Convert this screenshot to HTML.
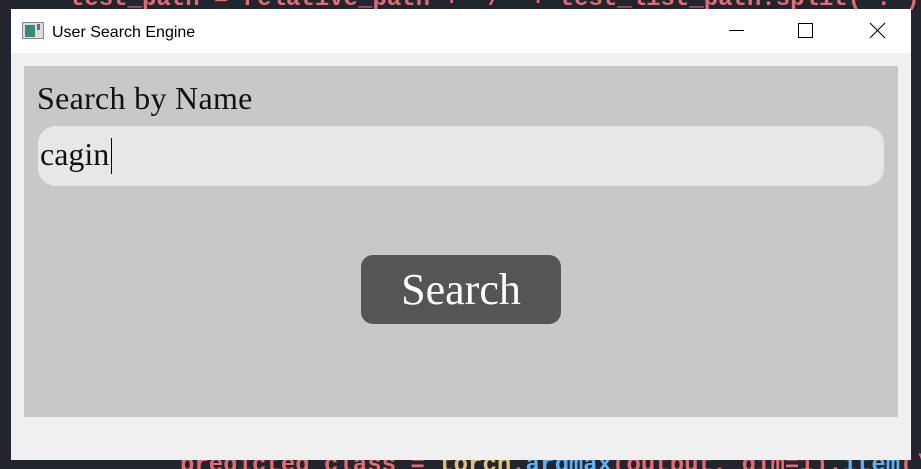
<!DOCTYPE html>
<html><head><style>
html,body{margin:0;width:921px;height:469px;overflow:hidden}
body{background:#22252d;position:relative;font-family:"Liberation Serif",serif}
.code{position:absolute;font-family:"Liberation Mono",monospace;font-size:24px;font-weight:bold;white-space:pre}
#win{position:absolute;left:11px;top:9px;width:900px;height:451px;background:#f0f0f0}
#tb{position:absolute;left:0;top:0;width:900px;height:44px;background:#fff}
#title{position:absolute;left:41px;top:15px;font-family:"Liberation Sans",sans-serif;font-size:16px;color:#000}
#panel{position:absolute;left:13px;top:57px;width:874px;height:351px;background:#c8c8c8}
#lbl{position:absolute;left:13px;top:14px;font-size:32px;color:#111;letter-spacing:0.3px}
#inp{position:absolute;left:14px;top:60px;width:846px;height:60px;background:#e7e7e7;border-radius:18px}
#inp span{position:absolute;left:2px;top:10px;font-size:32px;color:#111}
#caret{position:absolute;left:73px;top:12px;width:1px;height:36px;background:#000}
#btn{position:absolute;left:337px;top:189px;width:200px;height:69px;background:#555556;border-radius:12px;color:#fff;font-size:44px;text-align:center;line-height:69px}
</style></head><body>
<div class="code" style="left:70px;top:-14px;color:#e06c75">test_path = relative_path + '/' + test_list_path.split('.')[0]</div>
<div class="code" style="left:180px;top:452px;color:#e06c75">predicted_class = <span style="color:#e5c07b">torch</span>.<span style="color:#61afef">argmax</span>(output, dim=1).<span style="color:#61afef">item</span>()</div>
<div id="win">
<div id="tb">
<svg style="position:absolute;left:11px;top:13px" width="23" height="19"><rect x="0.5" y="0.5" width="21" height="16" fill="#ddd" stroke="#888"/><rect x="3" y="3" width="10" height="12" fill="#3a8a7a"/><rect x="15" y="2" width="3" height="6" fill="#5a6aa8"/></svg>
<div id="title">User Search Engine</div>
<svg style="position:absolute;left:700px;top:0" width="200" height="44"><line x1="18" y1="21.5" x2="33" y2="21.5" stroke="#000"/><rect x="87.5" y="14.5" width="14" height="14" fill="none" stroke="#000"/><path d="M159 14L174 29M174 14L159 29" stroke="#000"/></svg>
</div>
<div id="panel">
<div id="lbl">Search by Name</div>
<div id="inp"><span>cagin</span><div id="caret"></div></div>
<div id="btn">Search</div>
</div>
</div>
</body></html>
